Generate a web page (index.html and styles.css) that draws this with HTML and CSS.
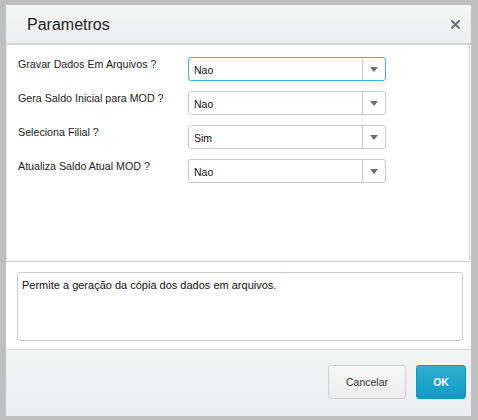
FILE: index.html
```html
<!DOCTYPE html>
<html>
<head>
<meta charset="utf-8">
<link rel="stylesheet" href="styles.css">
</head>
<body>
<div class="frame">
  <div class="dialog">
    <div class="header">
      <span class="title">Parametros</span>
      <svg class="close" width="9" height="9" viewBox="0 0 9 9"><path d="M1 1 L8 8 M8 1 L1 8" stroke="#6a6e75" stroke-width="2" stroke-linecap="square"/></svg>
    </div>
    <div class="panel">
      <div class="form">
        <div class="label">Gravar Dados Em Arquivos ?</div>
        <div class="select focused"><span class="value">Nao</span><span class="arrow"></span></div>
        <div class="label">Gera Saldo Inicial para MOD ?</div>
        <div class="select"><span class="value">Nao</span><span class="arrow"></span></div>
        <div class="label">Seleciona Filial ?</div>
        <div class="select"><span class="value">Sim</span><span class="arrow"></span></div>
        <div class="label">Atualiza Saldo Atual MOD ?</div>
        <div class="select"><span class="value">Nao</span><span class="arrow"></span></div>
      </div>
    </div>
    <div class="help">
      <div class="helpbox">Permite a geração da cópia dos dados em arquivos.</div>
    </div>
    <div class="footer">
      <button class="btn cancel">Cancelar</button>
      <button class="btn ok">OK</button>
    </div>
  </div>
</div>
</body>
</html>
```
FILE: styles.css
```css
html, body {
  margin: 0;
  padding: 0;
}
body {
  font-family: "Liberation Sans", Arial, sans-serif;
  color: #222;
}
.frame {
  width: 478px;
  height: 420px;
  box-sizing: border-box;
  background: #bfbfbf;
  padding: 5px 7px 4px 6px;
}
.dialog {
  height: 100%;
  display: flex;
  flex-direction: column;
  background: #fff;
}
.header {
  height: 38px;
  border-bottom: 2px solid #d2d3d4;
  background: linear-gradient(#f4f5f5, #eceeef);
  display: flex;
  align-items: center;
  justify-content: space-between;
  padding: 0 11px 0 21px;
  flex: none;
}
.title {
  font-size: 16px;
  color: #1d1d1f;
  padding-top: 1px;
}
.close {
  display: block;
  margin-top: 1px;
}
.panel {
  flex: none;
  border-left: 1px solid #e6e6e6;
  border-right: 1px solid #cfcfcf;
  border-bottom: 1px solid #cfcfcf;
  margin-right: 1px;
  padding: 12px 0 0 11px;
  box-sizing: border-box;
  height: 217px;
}
.form {
  display: grid;
  grid-template-columns: 170px 198px;
  grid-auto-rows: 24px;
  row-gap: 10px;
}
.label {
  font-size: 10.7px;
  color: #222;
  line-height: 14px;
}
.select {
  box-sizing: border-box;
  border: 1px solid #c9c9c9;
  border-radius: 3px;
  display: flex;
  align-items: center;
  background: #fff;
}
.select.focused {
  border-color: #3fb3d6;
}
.value {
  flex: 1;
  font-size: 10.5px;
  color: #111;
  padding-left: 5px;
  padding-top: 1px;
}
.arrow {
  width: 22px;
  height: 100%;
  border-left: 1px solid #c9c9c9;
  display: flex;
  align-items: center;
  justify-content: center;
}
.arrow::after {
  content: "";
  width: 0;
  height: 0;
  margin-top: 1px;
  border-left: 4px solid transparent;
  border-right: 4px solid transparent;
  border-top: 5px solid #6a6e75;
}
.help {
  flex: 1;
  padding: 10px 8px 8px 11px;
  display: flex;
}
.helpbox {
  flex: 1;
  border: 1px solid #cbcbcb;
  border-radius: 3px;
  font-size: 11px;
  color: #111;
  padding: 6px 4px;
}
.footer {
  flex: none;
  border-top: 1px solid #d8d9da;
  background: linear-gradient(#f2f3f3, #edeef0);
  display: flex;
  justify-content: flex-end;
  align-items: flex-start;
  gap: 10px;
  padding: 15px 5px 0 0;
  box-sizing: border-box;
  height: 67px;
}
.btn {
  height: 34px;
  border-radius: 3px;
  font-family: "Liberation Sans", Arial, sans-serif;
  font-size: 10.5px;
  cursor: pointer;
}
.cancel {
  width: 78px;
  border: 1px solid #cfcfcf;
  background: linear-gradient(#f8f8f8, #ececec);
  color: #333;
}
.ok {
  width: 50px;
  border: 1px solid #1197bf;
  background: linear-gradient(#2fb0d1, #109ac4);
  color: #fff;
  font-weight: bold;
}
```
